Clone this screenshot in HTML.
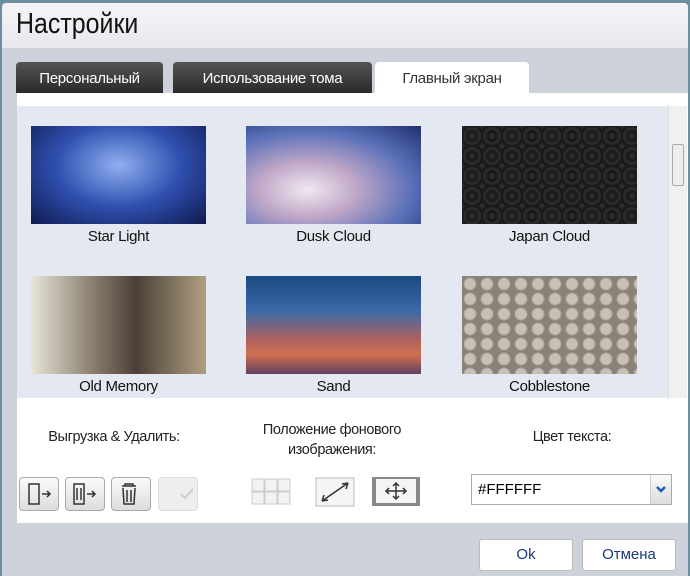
<!DOCTYPE html><html><head><meta charset="utf-8"><style>
body{margin:0;width:690px;height:576px;background:#6a8fa0;font-family:"Liberation Sans",sans-serif;overflow:hidden;position:relative}
.dlg{position:absolute;left:2px;top:3px;width:686px;height:573px;background:#cdd1d9;border-radius:4px 4px 0 0}
.title{position:absolute;left:0;top:0;width:686px;height:45px;background:linear-gradient(#f4f5f7,#e6e8ec);border-radius:4px 4px 0 0}
.title span{position:absolute;left:14px;top:5px;font-size:29px;color:#111;transform:scaleX(.86);transform-origin:left}
.tab{position:absolute;top:59px;height:31px;border-radius:4px 4px 0 0;font-size:15px;line-height:33px;text-align:center;letter-spacing:-.3px}
.dark{background:linear-gradient(#555,#2a2a2a);color:#fff}
.light{background:#fff;color:#333}
.panel{position:absolute;left:15px;top:90px;width:671px;height:430px;background:#fff}
.gal{position:absolute;left:0;top:13px;width:651px;height:292px;background:#e4e8f0;overflow:hidden}
.sb{position:absolute;left:651px;top:13px;width:18px;height:292px;background:#f0f0f0;border-left:1px solid #ddd}
.th{position:absolute;width:175px;height:98px}
.lb{position:absolute;width:175px;text-align:center;font-size:15px;color:#111;letter-spacing:-.3px}
.h{position:absolute;font-size:14.5px;color:#222;text-align:center;letter-spacing:-.4px}
.ib{position:absolute;top:474px;width:38px;height:32px;border:1px solid #aaa;border-radius:4px;background:linear-gradient(#fafafa,#ddd)}
.btn{position:absolute;top:536px;height:30px;border:1px solid #bbb;border-radius:3px;background:#fff;font-size:15px;color:#1a3a7a;text-align:center;line-height:30px}
</style></head><body>
<div class="dlg">
<div class="title"><span>Настройки</span></div>
<div class="tab dark" style="left:14px;width:147px">Персональный</div>
<div class="tab dark" style="left:171px;width:199px">Использование тома</div>
<div class="tab light" style="left:373px;width:154px">Главный экран</div>
<div class="panel">
<div class="gal">
<div class="th" style="left:14px;top:20px;background:radial-gradient(ellipse at 50% 40%,#8fb0f0,#3050b0 50%,#101a50)"></div>
<div class="lb" style="left:14px;top:122px">Star Light</div>
<div class="th" style="left:229px;top:20px;background:radial-gradient(ellipse at 35% 65%,#f0e8f0,#c0a8c8 30%,#5a70b8 65%,#203070)"></div>
<div class="lb" style="left:229px;top:122px">Dusk Cloud</div>
<div class="th" style="left:445px;top:20px;background:repeating-radial-gradient(circle at 10px 10px,#2a2a2a 0 3px,#1a1a1a 3px 6px);background-size:20px 20px"></div>
<div class="lb" style="left:445px;top:122px">Japan Cloud</div>
<div class="th" style="left:14px;top:170px;background:linear-gradient(90deg,#e8e4d8,#8a8070 35%,#4a4038 60%,#b0a080)"></div>
<div class="lb" style="left:14px;top:272px">Old Memory</div>
<div class="th" style="left:229px;top:170px;background:linear-gradient(#1a4a80,#3a6aa8 35%,#b06060 65%,#d07050 80%,#604060)"></div>
<div class="lb" style="left:229px;top:272px">Sand</div>
<div class="th" style="left:445px;top:170px;background:radial-gradient(circle at 8px 8px,#c8c0b6 0 5px,#8a8278 7px);background-size:17px 15px"></div>
<div class="lb" style="left:445px;top:272px">Cobblestone</div>
</div>
<div class="sb"><div style="position:absolute;left:3px;top:38px;width:10px;height:40px;border:1px solid #aaa;background:#eee;border-radius:2px"></div></div>
</div>
<div class="h" style="left:22px;top:426px;width:180px">Выгрузка &amp; Удалить:</div>
<div class="h" style="left:240px;top:417px;width:180px;line-height:20px">Положение фонового изображения:</div>
<div class="h" style="left:480px;top:426px;width:180px">Цвет текста:</div>
<div class="ib" style="left:17px"></div><div class="ib" style="left:63px"></div><div class="ib" style="left:109px"></div>
<div class="ib" style="left:156px;background:#eee;border-color:#ddd"></div>
<svg style="position:absolute;left:17px;top:474px" width="190" height="34"><g fill="none" stroke="#333" stroke-width="1.5"><rect x="10" y="7" width="10" height="20"/><path d="M23 17h8M28 14l3 3-3 3"/><rect x="55" y="7" width="10" height="20"/><path d="M58 11v12M62 11v12M68 17h8M73 14l3 3-3 3"/><path d="M103 9h14M106 9v-2h8v2M104 11l1 16h10l1-16M108 13v12M112 13v12"/></g><path d="M162 17l4 4 8-9" stroke="#ccc" stroke-width="2" fill="none"/></svg>
<svg style="position:absolute;left:248px;top:474px" width="180" height="34"><g fill="#f2f2f2" stroke="#ccc"><rect x="2" y="2" width="12" height="12"/><rect x="15" y="2" width="12" height="12"/><rect x="28" y="2" width="12" height="12"/><rect x="2" y="15" width="12" height="12"/><rect x="15" y="15" width="12" height="12"/><rect x="28" y="15" width="12" height="12"/></g><rect x="66" y="1" width="38" height="28" fill="#f4f4f4" stroke="#bbb"/><path d="M72 24l26-18M72 24l2-6M72 24l6-1M98 6l-6 1M98 6l-2 6" stroke="#333" stroke-width="1.5" fill="none"/><rect x="122" y="-1" width="48" height="30" fill="#888"/><rect x="126" y="2" width="40" height="24" fill="#f4f4f4"/><path d="M146 6v16M136 14h20M143 9l3-3 3 3M143 19l3 3 3-3M139 11l-3 3 3 3M153 11l3 3-3 3" stroke="#333" stroke-width="1.5" fill="none"/></svg>
<div style="position:absolute;left:469px;top:471px;width:199px;height:29px;border:1px solid #aaa;background:#fff;font-size:15px;line-height:29px;text-indent:6px">#FFFFFF<div style="position:absolute;right:0;top:0;width:20px;height:29px;background:linear-gradient(#fafafa,#ddd);border-left:1px solid #ccc;text-indent:0"><svg width="20" height="29" style="display:block"><path d="M6 12l4 4 4-4" stroke="#1a5ab8" stroke-width="2.5" fill="none"/></svg></div></div>
<div class="btn" style="left:477px;width:92px">Ok</div>
<div class="btn" style="left:580px;width:92px">Отмена</div>
</div>
</body></html>
